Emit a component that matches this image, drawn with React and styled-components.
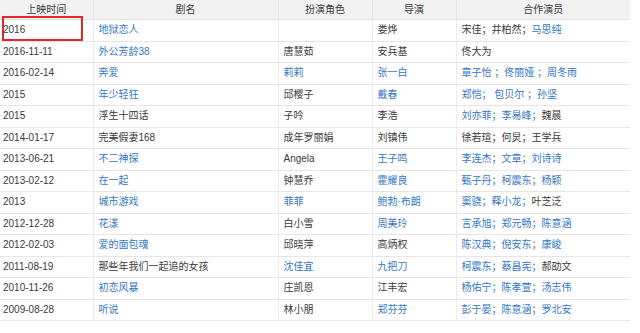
import styled, { createGlobalStyle } from "styled-components";

const GlobalStyle = createGlobalStyle`
  body {
    margin: 0;
    background: #fff;
    font-family: "Liberation Sans", "Noto Sans CJK SC", sans-serif;
  }
`;

const Wrap = styled.div`
  position: relative;
  width: 630px;
`;

const Table = styled.table`
  width: 630px;
  border-collapse: collapse;
  table-layout: fixed;
  font-size: 10px;
  color: #3a3a3a;
`;

const Th = styled.th`
  height: 19px;
  padding: 0;
  background: #f2f2f2;
  font-weight: normal;
  text-align: center;
  border-left: 1px solid #e6e6e6;
  border-bottom: 1px solid #e2e2e2;
  line-height: 18px;
  &:first-child {
    border-left: none;
  }
`;

const Td = styled.td`
  height: 20.5px;
  padding: 0 0 0 ${(p) => (p.$first ? 3 : 5)}px;
  border-left: 1px solid #ececec;
  border-bottom: 1px solid #e6e6e6;
  white-space: nowrap;
  overflow: hidden;
  line-height: 20px;
  &:first-child {
    border-left: none;
  }
`;

const Link = styled.span`
  color: #3377c4;
`;

const Marker = styled.div`
  position: absolute;
  left: 2px;
  top: 16px;
  width: 77px;
  height: 21px;
  border: 2px solid #e3262a;
  pointer-events: none;
`;

const cols = [93, 185, 94, 84, 174];

const rows = [
  ["2016", ["@地狱恋人"], [""], ["娄烨"], ["宋佳；井柏然；", "@马思纯"]],
  ["2016-11-11", ["@外公芳龄38"], ["唐慧茹"], ["安兵基"], ["佟大为"]],
  ["2016-02-14", ["@奔爱"], ["@莉莉"], ["@张一白"], ["@章子怡 ；佟丽娅 ；周冬雨"]],
  ["2015", ["@年少轻狂"], ["邱樱子"], ["@戴春"], ["@郑恺； 包贝尔 ；孙坚"]],
  ["2015", ["浮生十四话"], ["子吟"], ["李浩"], ["@刘亦菲；李易峰；", "魏晨"]],
  ["2014-01-17", ["完美假妻168"], ["成年罗丽娟"], ["刘镇伟"], ["徐若瑄；何炅；王学兵"]],
  ["2013-06-21", ["@不二神探"], ["Angela"], ["@王子鸣"], ["@李连杰；文章；刘诗诗"]],
  ["2013-02-12", ["@在一起"], ["钟慧乔"], ["@霍耀良"], ["@甄子丹；柯震东；杨颖"]],
  ["2013", ["@城市游戏"], ["@菲菲"], ["@鲍勃·布朗"], ["@窦骁；释小龙；", "叶芝泛"]],
  ["2012-12-28", ["@花漾"], ["白小雪"], ["@周美玲"], ["@言承旭；郑元畅；陈意涵"]],
  ["2012-02-03", ["@爱的面包魂"], ["邱晓萍"], ["高炳权"], ["@陈汉典；倪安东；康峻"]],
  ["2011-08-19", ["那些年我们一起追的女孩"], ["@沈佳宜"], ["@九把刀"], ["@柯震东；蔡昌宪；", "郝劭文"]],
  ["2010-11-26", ["@初恋风暴"], ["庄凯恩"], ["江丰宏"], ["@杨佑宁；陈孝萱；汤志伟"]],
  ["2009-08-28", ["@听说"], ["林小朋"], ["@郑芬芬"], ["@彭于晏；陈意涵；罗北安"]],
];

const Cell = ({ parts }) =>
  parts.map((t, i) =>
    t.startsWith("@") ? <Link key={i}>{t.slice(1)}</Link> : <span key={i}>{t}</span>
  );

export default function App() {
  return (
    <>
      <GlobalStyle />
      <Wrap>
        <Table>
          <colgroup>
            {cols.map((w, i) => (
              <col key={i} style={{ width: w }} />
            ))}
          </colgroup>
          <thead>
            <tr>
              <Th>上映时间</Th>
              <Th>剧名</Th>
              <Th>扮演角色</Th>
              <Th>导演</Th>
              <Th>合作演员</Th>
            </tr>
          </thead>
          <tbody>
            {rows.map((r, i) => (
              <tr key={i}>
                <Td $first>{r[0]}</Td>
                <Td><Cell parts={r[1]} /></Td>
                <Td><Cell parts={r[2]} /></Td>
                <Td><Cell parts={r[3]} /></Td>
                <Td><Cell parts={r[4]} /></Td>
              </tr>
            ))}
          </tbody>
        </Table>
        <Marker />
      </Wrap>
    </>
  );
}
